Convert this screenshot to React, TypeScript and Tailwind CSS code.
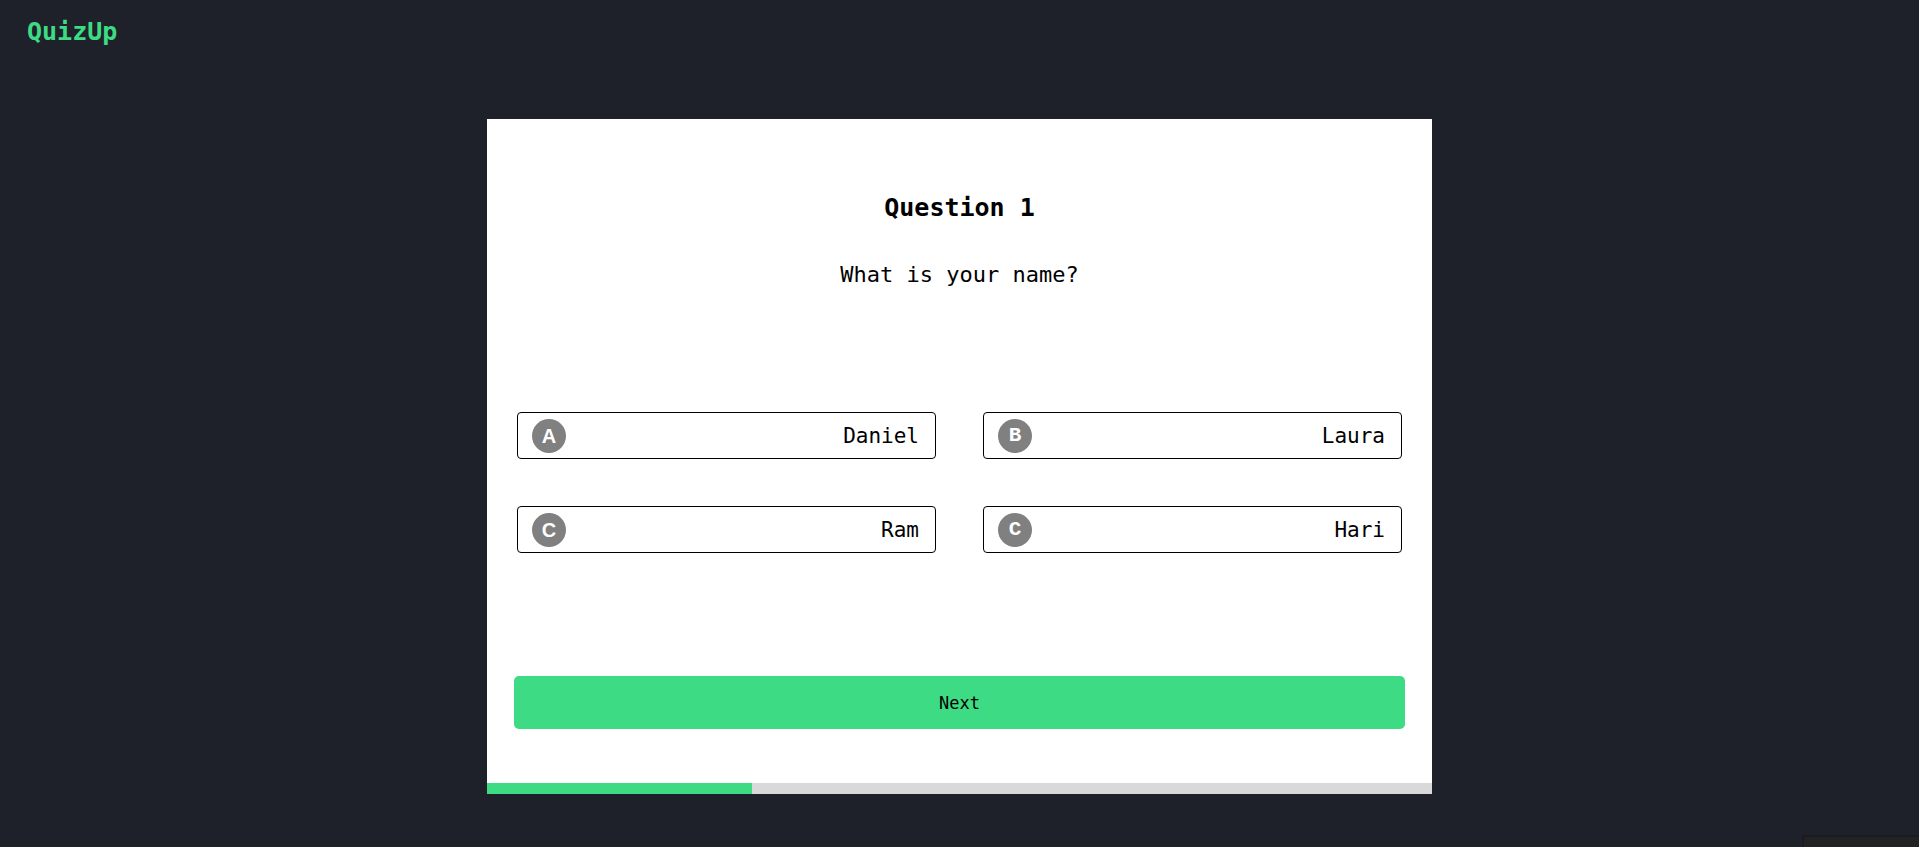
const options = [
  { letter: "A", label: "Daniel", mono: false },
  { letter: "B", label: "Laura", mono: true },
  { letter: "C", label: "Ram", mono: false },
  { letter: "C", label: "Hari", mono: true },
];

export default function App() {
  return (
    <div className="min-h-screen w-full bg-[#1f212a] font-['DejaVu_Sans_Mono',monospace] relative">
      <header className="px-[27px] pt-[17px]">
        <span className="text-[25px] leading-[30px] font-bold text-[#3ddc84]">QuizUp</span>
      </header>

      <div className="flex justify-center pt-[72px]">
        <div className="w-[945px] bg-white flex flex-col">
          <div className="pt-[74px] flex flex-col items-center">
            <h1 className="text-[25px] leading-[30px] font-bold text-black">Question 1</h1>
            <p className="mt-[37px] text-[22px] leading-[30px] text-black">What is your name?</p>
          </div>

          <div className="mt-[122px] px-[30px] grid grid-cols-2 gap-x-[47px] gap-y-[47px]">
            {options.map((o, i) => (
              <button
                key={i}
                className="h-[47px] flex items-center justify-between border border-black rounded-[4px] pl-[14px] pr-[16px] bg-white"
              >
                <span
                  className={
                    o.mono
                      ? "w-[34px] h-[34px] rounded-full bg-[#808080] text-white flex items-center justify-center text-[21px] font-bold font-['Liberation_Mono',monospace]"
                      : "w-[34px] h-[34px] rounded-full bg-[#808080] text-white flex items-center justify-center text-[20px] font-bold font-['Liberation_Sans',sans-serif]"
                  }
                >
                  {o.letter}
                </span>
                <span className="pt-[2px] text-[21px] text-black">{o.label}</span>
              </button>
            ))}
          </div>

          <div className="mt-[123px] px-[27px]">
            <button className="w-full h-[53px] pt-[3px] rounded-[5px] bg-[#3ddc84] text-[17px] text-black">
              Next
            </button>
          </div>

          <div className="mt-[54px] h-[11px] bg-[#d9d9d9]">
            <div className="h-full w-[265px] bg-[#3ddc84]" />
          </div>
        </div>
      </div>

      <div className="absolute right-0 bottom-0 w-[117px] h-[12px] bg-[#222222] border-t-2 border-l-2 border-[#191a22]" />
    </div>
  );
}
